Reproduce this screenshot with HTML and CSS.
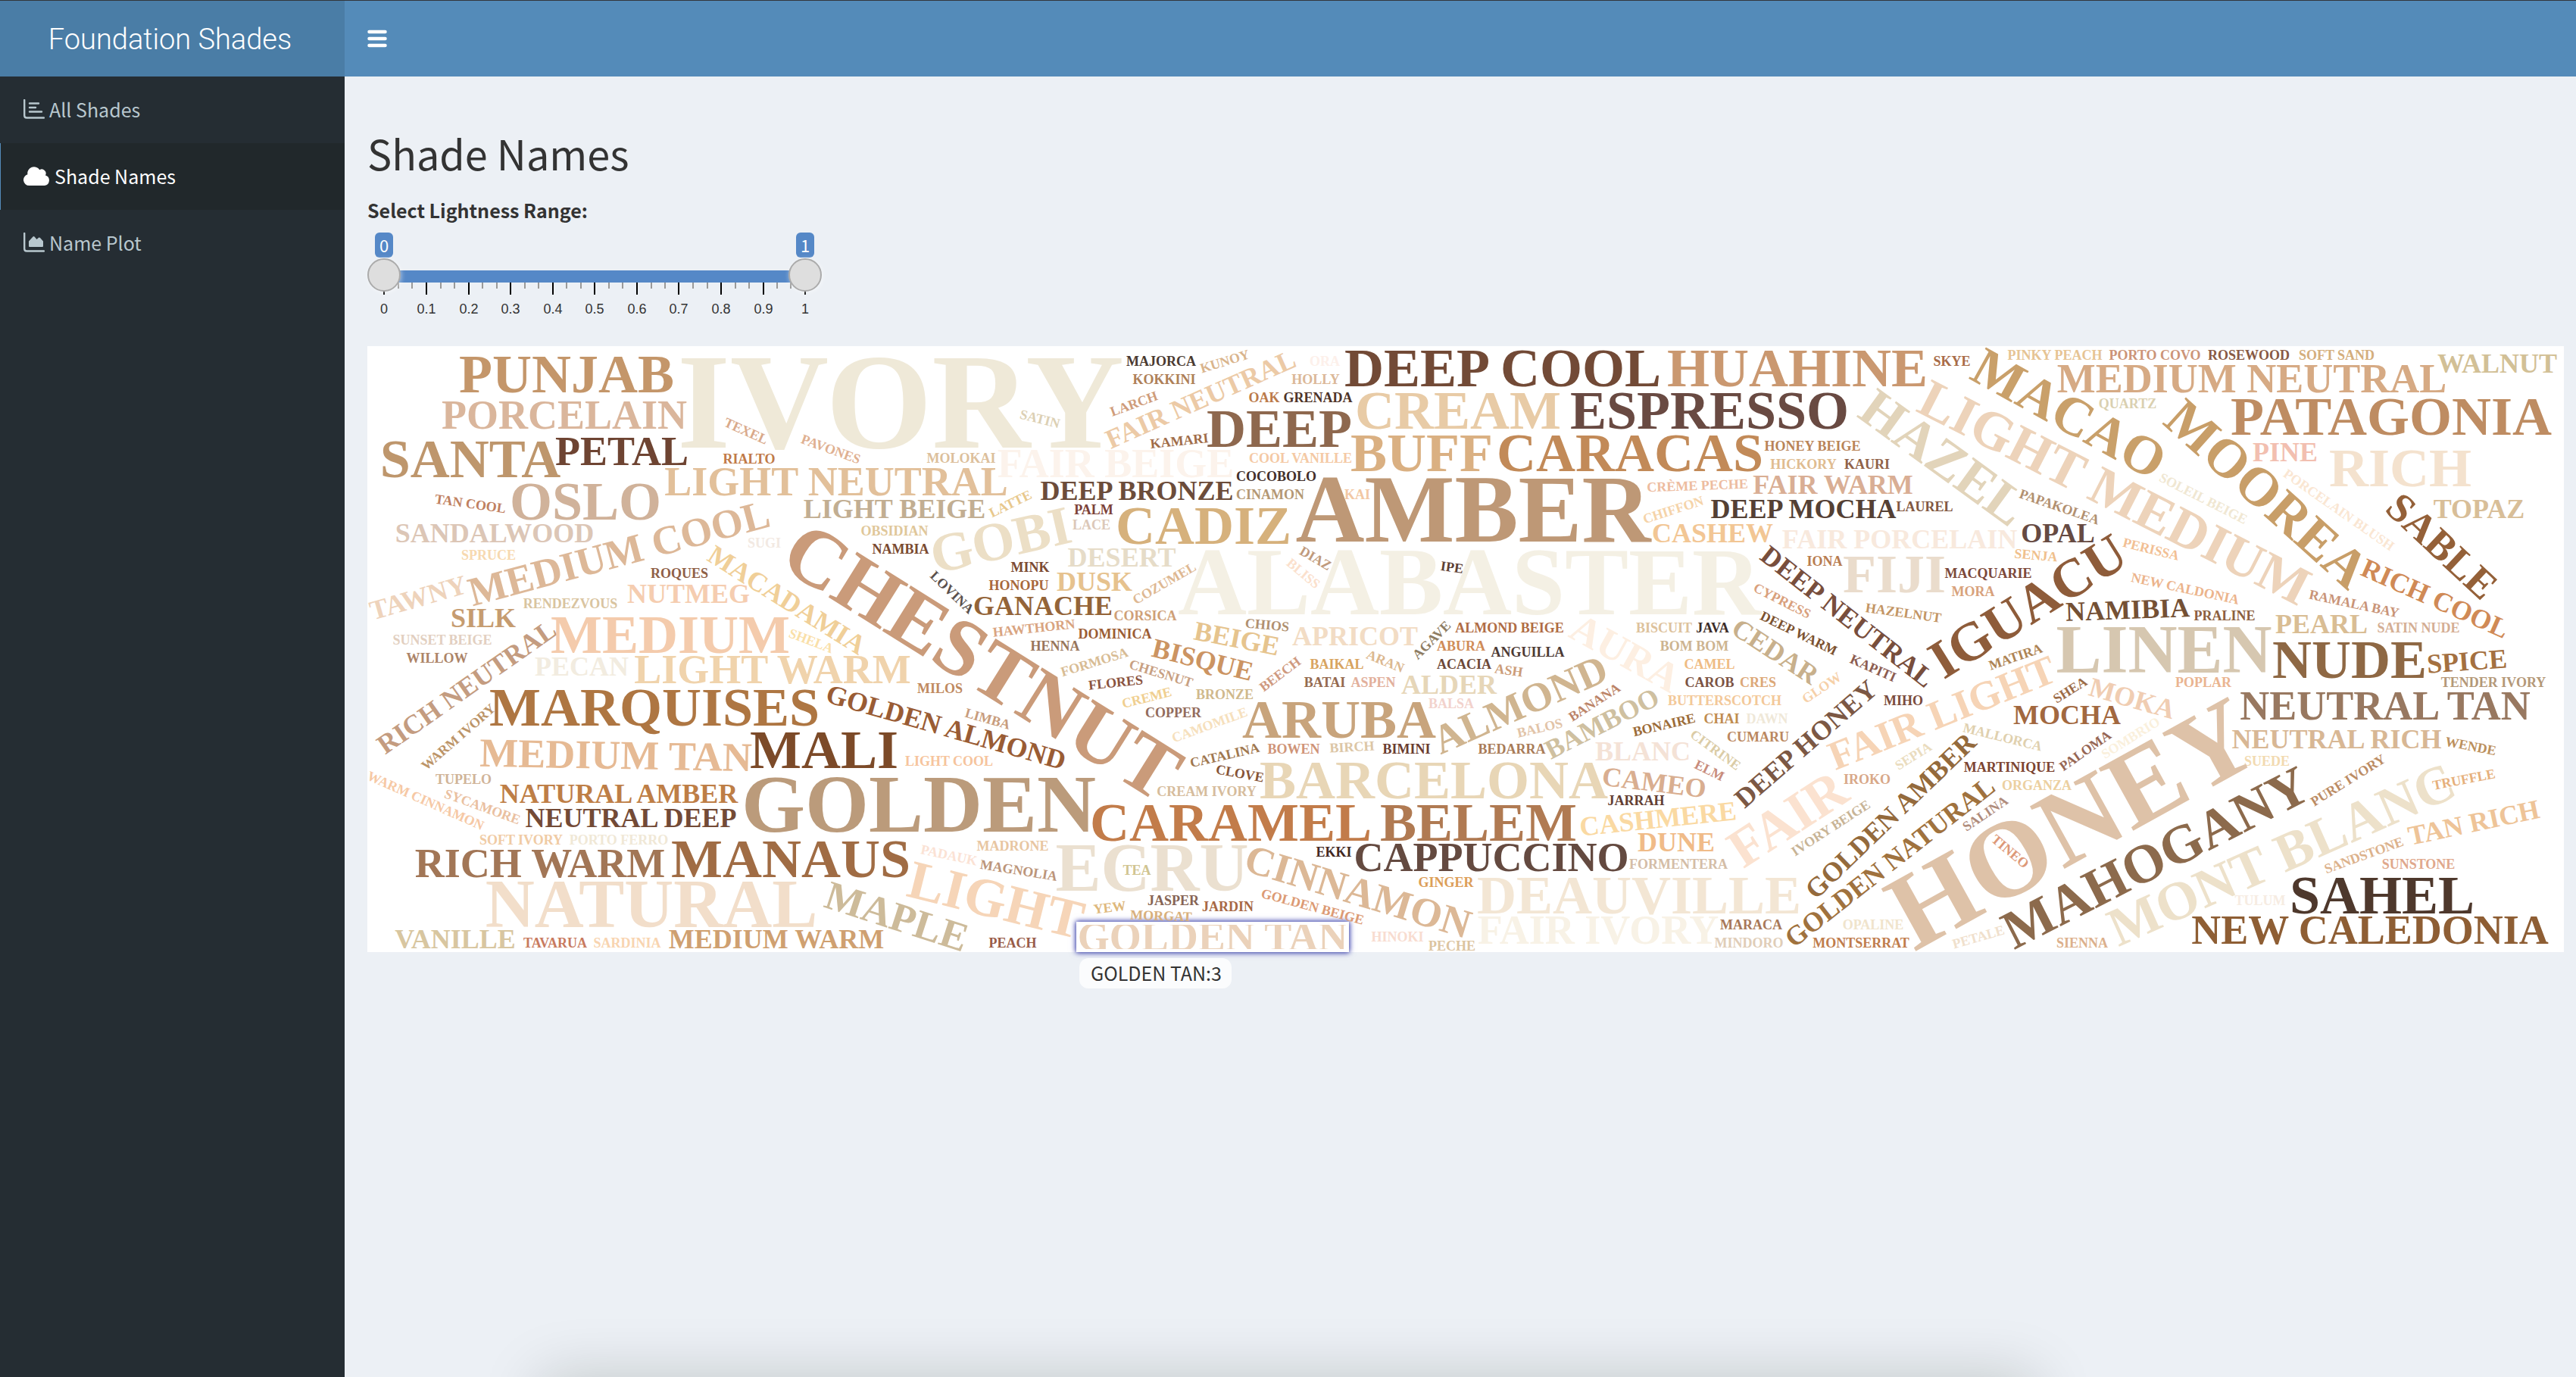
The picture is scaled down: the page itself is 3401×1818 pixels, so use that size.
FILE: index.html
```html
<!DOCTYPE html>
<html lang="en">
<head>
<meta charset="utf-8">
<meta name="viewport" content="width=device-width, initial-scale=1">
<title>Foundation Shades</title>
<link rel="stylesheet" href="styles.css">
</head>
<body>
<header class="topbar">
  <a class="brand" href="#">Foundation Shades</a>
  <button class="menu-toggle" type="button" aria-label="Toggle navigation">
    <svg viewBox="0 0 26 24" aria-hidden="true"><path d="M2.500 3H23.500M2.500 12H23.500M2.500 21H23.500"/></svg>
  </button>
</header>
<div class="shell">
  <nav class="sidebar" aria-label="Pages">
    <a class="nav-item" href="#all-shades">
      <svg class="nav-icon" viewBox="0 0 28 26" aria-hidden="true"><path class="stroke" d="M1.200 1V21.500Q1.200 24.500 4.200 24.500H27M8 5.500H20M8 11H16M8 16.500H24"/></svg>
      <span>All Shades</span>
    </a>
    <a class="nav-item active" href="#shade-names" aria-current="page">
      <svg class="nav-icon wide" viewBox="0 0 35 26" aria-hidden="true"><path d="M7.500 26A7.500 7.500 0 0 1 5.400 11.300 A8.700 8.700 0 0 1 21.300 5.200 A5.500 5.500 0 0 1 29 12.400 A7 7 0 0 1 28 26Z"/></svg>
      <span>Shade Names</span>
    </a>
    <a class="nav-item" href="#name-plot">
      <svg class="nav-icon" viewBox="0 0 28 26" aria-hidden="true"><path class="stroke" d="M1.200 1V21.500Q1.200 24.500 4.200 24.500H27"/><path d="M7 18V11.500L12.500 5.500Q13.500 4.500 14.500 5.500L17.500 9L20 6.800Q21 6.200 22 7L26 11.500V18Q26 19 25 19H8Q7 19 7 18Z"/></svg>
      <span>Name Plot</span>
    </a>
  </nav>
  <main class="content">
    <h1>Shade Names</h1>
    <div class="range">
      <label class="range-label" for="light-min">Select Lightness Range:</label>
      <div class="range-values">
        <output for="light-min">0</output>
        <output for="light-max">1</output>
      </div>
      <div class="range-track">
        <input id="light-min" type="range" min="0" max="1" step="0.01" value="0">
        <input id="light-max" type="range" min="0" max="1" step="0.01" value="1" aria-label="Upper lightness">
      </div>
      <svg class="range-scale" viewBox="0 0 600 50" aria-hidden="true">
        <path class="minor" d="M41 0v8M59 0v8M97 0v8M115 0v8M152 0v8M171 0v8M208 0v8M226 0v8M263 0v8M282 0v8M319 0v8M337 0v8M375 0v8M393 0v8M430 0v8M449 0v8M486 0v8M504 0v8M541 0v8M559 0v8"/>
        <path class="major" d="M22 0v16M78 0v16M134 0v16M189 0v16M245 0v16M300 0v16M356 0v16M411 0v16M467 0v16M523 0v16M578 0v16"/>
        <text x="22" y="41">0</text><text x="78" y="41">0.1</text><text x="134" y="41">0.2</text><text x="189" y="41">0.3</text><text x="245" y="41">0.4</text><text x="300" y="41">0.5</text><text x="356" y="41">0.6</text><text x="411" y="41">0.7</text><text x="467" y="41">0.8</text><text x="523" y="41">0.9</text><text x="578" y="41">1</text>
      </svg>
    </div>
    <svg class="cloud" viewBox="0 0 2900 800" role="img" aria-label="Word cloud of foundation shade names">
      <rect class="cloud-paper" width="2900" height="800"/>
      <rect class="pick-glow" x="936" y="760" width="360" height="40"/>
      <g id="words"></g>
      <rect class="pick-frame" x="938" y="762" width="356" height="36"/>
      <rect class="tip-bubble" x="940" y="808" width="201" height="40" rx="12"/>
      <text class="tip-text" x="955" y="838">GOLDEN TAN:3</text>
    </svg>
  </main>
</div>
<div class="bottom-shade"></div>
<script src="cloud.js"></script>
</body>
</html>
```
FILE: styles.css
```css
* { box-sizing: border-box; }

body {
  margin: 0;
  min-height: 100vh;
  display: flex;
  flex-direction: column;
  background: #ecf0f5;
  color: #333;
  font-family: "Noto Sans CJK SC", "Noto Sans", sans-serif;
  font-size: 25px;
  line-height: 36px;
}

.topbar {
  display: flex;
  height: 101px;
  border-top: 1px solid #33363b;
  background: #548bb9;
}

.brand {
  display: flex;
  align-items: center;
  justify-content: center;
  width: 455px;
  padding: 2px 6px 0 0;
  background: #4a7da6;
  color: #fff;
  font: 300 38px/48px Roboto, "Liberation Sans", sans-serif;
  text-decoration: none;
}

.menu-toggle {
  display: flex;
  align-items: center;
  padding: 0 30px;
  border: 0;
  background: none;
}

.menu-toggle svg {
  width: 26px;
  height: 24px;
  fill: none;
  stroke: #fff;
  stroke-width: 4.500;
  stroke-linecap: round;
}

.shell {
  display: flex;
  flex: 1;
}

.sidebar {
  flex: none;
  width: 455px;
  background: #252d33;
}

.nav-item {
  display: flex;
  align-items: center;
  gap: 6px;
  height: 88px;
  padding: 0 0 2px 30px;
  border-left: 1px solid transparent;
  color: #b8c7ce;
  text-decoration: none;
}

.nav-item.active {
  background: #21282b;
  border-left-color: #548bb9;
  color: #fff;
}

.nav-icon {
  width: 28px;
  height: 26px;
  fill: currentColor;
}

.nav-icon.wide { width: 35px; }

.nav-icon .stroke {
  fill: none;
  stroke: currentColor;
  stroke-width: 2.400;
  stroke-linecap: round;
}

.content {
  flex: 1;
  min-width: 0;
  padding: 64px 16px 30px 30px;
}

h1 {
  margin: 0;
  font-size: 54px;
  font-weight: 400;
  line-height: 74px;
}

.range {
  width: 600px;
  margin-bottom: 34px;
}

.range-label {
  display: block;
  margin-top: 20px;
  font-weight: 700;
}

.range-values {
  display: flex;
  justify-content: space-between;
  padding: 12px 10px 0;
}

.range-values output {
  width: 24px;
  height: 33px;
  border-radius: 6px;
  background: #5588c7;
  color: #fff;
  font-size: 22px;
  line-height: 32px;
  text-align: center;
}

.range-track {
  display: grid;
  align-items: center;
  height: 44px;
  margin-top: 1px;
  background: linear-gradient(#5588c7, #5588c7) center 16px / 556px 16px no-repeat;
}

.range-track input {
  grid-area: 1 / 1;
  width: 100%;
  height: 44px;
  margin: 0;
  appearance: none;
  background: none;
  pointer-events: none;
}

.range-track input::-webkit-slider-thumb {
  appearance: none;
  width: 44px;
  height: 44px;
  border: 2px solid #ababab;
  border-radius: 50%;
  background: #dedede;
  box-shadow: 1px 1px 6px rgba(255, 255, 255, 0.5);
  pointer-events: auto;
}

.range-scale {
  display: block;
  position: relative;
  z-index: -1;
  width: 600px;
  height: 50px;
  margin-top: -12px;
}

.range-scale path { stroke-width: 2; }
.range-scale .minor { stroke: #999; }
.range-scale .major { stroke: #000; }

.range-scale text {
  fill: #333;
  font: 18px "Liberation Sans", Arial, sans-serif;
  text-anchor: middle;
}

.cloud {
  display: block;
  width: 100%;
  overflow: visible;
}

.cloud-paper { fill: #fff; }

#words {
  font-family: "Liberation Serif", "Times New Roman", serif;
  font-weight: 700;
  text-anchor: middle;
}

.pick-glow {
  fill: #fff;
  filter: drop-shadow(0 0 3px #3a3fa8) drop-shadow(0 0 3px rgba(70, 75, 180, 0.6));
}

.pick-frame {
  fill: none;
  stroke: #fff;
  stroke-width: 4;
}

.tip-bubble { fill: rgba(255, 255, 255, 0.8); }

.tip-text {
  fill: #333;
  font-size: 25px;
}

.bottom-shade {
  position: fixed;
  bottom: -100px;
  left: 21%;
  width: 58%;
  height: 100px;
  box-shadow: 0 0 80px rgba(0, 20, 10, 0.180);
  pointer-events: none;
}
```
FILE: cloud.js
```js
// Each row: shade name, count, centre x, centre y, angle in degrees, colour.
const shades = [
  ["PUNJAB",4,263,37,0,"#c4966a"],["PORCELAIN",3,260,91,0,"#dab69c"],["SANTA",4,136,149,0,"#be966c"],
  ["PETAL",3,336,139,0,"#6e4432"],["IVORY",10,704,74,0,"#efe9d8"],["TEXEL",1,500,112,24,"#d9a98a"],
  ["PAVONES",1,612,136,20,"#dfb091"],["RIALTO",1,504,149,0,"#c07a48"],["LIGHT NEUTRAL",3,619,179,0,"#e2c09a"],
  ["OSLO",4,288,205,0,"#d0b29a"],["TAN COOL",1,136,208,8,"#c08060"],["SANDALWOOD",2,168,247,0,"#dcc6b6"],
  ["MEDIUM COOL",3,332,273,-15,"#ddb898"],["SUGI",1,524,260,0,"#f2e9e2"],["SPRUCE",1,160,276,0,"#f7d9b0"],
  ["ROQUES",1,412,300,0,"#8f6046"],["NUTMEG",2,424,327,0,"#f5cdb0"],["TAWNY",2,67,332,-16,"#eed3bb"],
  ["RENDEZVOUS",1,268,340,0,"#d9c4a0"],["MACADAMIA",2,554,335,32,"#f0cf98"],["SILK",2,153,359,0,"#c69c70"],
  ["SUNSET BEIGE",1,99,388,0,"#e2cfc0"],["RICH NEUTRAL",2,131,450,-35,"#c49c80"],["MEDIUM",4,400,381,0,"#f4cbac"],
  ["SHELA",1,586,389,21,"#fae0a8"],["CHESTNUT",6,812,416,32,"#ca9b7a"],["OBSIDIAN",1,696,244,0,"#e0c79a"],
  ["NAMBIA",1,704,268,0,"#7a4a30"],["LIGHT BEIGE",2,696,215,0,"#c2ae92"],
  ["SATIN",1,888,96,14,"#dcd0b4"],["MAJORCA",1,1048,20,0,"#4a3a30"],["KUNOY",1,1132,20,-17,"#d9b48c"],
  ["KOKKINI",1,1052,44,0,"#ae8058"],["ORA",1,1264,20,0,"#fdf0ea"],["HOLLY",1,1252,44,0,"#dbb898"],
  ["LARCH",1,1012,76,-20,"#cf9c7a"],["FAIR NEUTRAL",2,1100,70,-24,"#eccaa6"],["OAK",1,1184,68,0,"#bb7a4a"],
  ["GRENADA",1,1255,68,0,"#4e3428"],["DEEP",4,1204,109,0,"#8e684e"],["KAMARI",1,1072,125,-6,"#a06c48"],
  ["MOLOKAI",1,784,148,0,"#dcbf9c"],["FAIR BEIGE",3,988,155,0,"#fcf3ec"],["COOL VANILLE",1,1232,148,0,"#f4c9a4"],
  ["COCOBOLO",1,1200,172,0,"#43302a"],["CINAMON",1,1192,196,0,"#b49874"],["DEEP BRONZE",2,1016,191,0,"#6c4c3a"],
  ["CREAM",4,1440,85,0,"#e8cba6"],["BUFF",4,1392,141,0,"#dab082"],["LATTE",1,849,208,-26,"#e8c88c"],
  ["GOBI",4,836,256,-13,"#ecdfc6"],["PALM",1,959,216,0,"#7c4238"],["LACE",1,956,236,0,"#dcc8b8"],
  ["CADIZ",4,1104,237,0,"#d6b17c"],["AMBER",7,1460,216,0,"#be9876"],["KAI",1,1307,196,0,"#f2c8a4"],
  ["DESERT",2,996,279,0,"#e6dcc8"],["MINK",1,875,292,0,"#7c4a32"],["HONOPU",1,860,316,0,"#a8683c"],
  ["DUSK",2,960,311,0,"#e6c28e"],["LOVINA",1,772,325,44,"#5a504c"],["GANACHE",2,892,343,0,"#946438"],
  ["CORSICA",1,1027,356,0,"#cfa078"],["COZUMEL",1,1052,313,-30,"#deb892"],["ALABASTER",7,1455,312,0,"#f4f0e4"],
  ["DIAZ",1,1252,280,30,"#c09a7c"],["BLISS",1,1236,300,40,"#fbe0cc"],["IPE",1,1432,292,8,"#5c4034"],
  ["HAWTHORN",1,880,372,-6,"#d9a480"],["DOMINICA",1,987,380,0,"#9c5c34"],["HENNA",1,908,396,0,"#98765c"],
  ["CHIOS",1,1188,368,5,"#b09070"],["BEIGE",2,1148,386,11,"#e6c48e"],["APRICOT",2,1304,383,0,"#f2dcc4"],
  ["AGAVE",1,1405,388,-45,"#8e7c62"],["ALMOND BEIGE",1,1508,372,0,"#b06c44"],["ABURA",1,1444,396,0,"#d08c58"],
  ["ANGUILLA",1,1532,404,0,"#4c3a34"],["ACACIA",1,1448,420,0,"#6c4838"],["ASH",1,1507,428,8,"#cc9c78"],
  ["BISQUE",2,1103,414,14,"#cc9462"],["ARAN",1,1344,416,22,"#dcb890"],["BEECH",1,1205,433,-37,"#cf9a80"],
  ["BAIKAL",1,1280,420,0,"#d8a460"],["BATAI",1,1264,444,0,"#956a50"],["ASPEN",1,1328,444,0,"#e2b09c"],
  ["ALDER",2,1428,447,0,"#e6d6b8"],["BALSA",1,1431,472,0,"#f2d2cc"],["FORMOSA",1,960,417,-17,"#d8bc94"],
  ["CHESNUT",1,1048,432,17,"#c8a082"],["FLORES",1,988,444,-6,"#8a5440"],["CREME",1,1029,464,-14,"#f0cf90"],
  ["BRONZE",1,1132,460,0,"#d0b98c"],["COPPER",1,1064,484,0,"#936c5c"],["CAMOMILE",1,1112,500,-20,"#f6e0bc"],
  ["MILOS",1,756,452,0,"#c08a60"],["LIMBA",1,819,492,16,"#c89c7c"],["GOLDEN ALMOND",2,764,503,16,"#9a5c34"],
  ["LIGHT COOL",1,768,548,0,"#f6c49c"],["ARUBA",4,1283,493,0,"#c8a47c"],["CATALINA",1,1132,540,-13,"#a07850"],
  ["BOWEN",1,1223,532,0,"#cf9478"],["BIRCH",1,1300,529,-3,"#dcc6a6"],["BIMINI",1,1372,532,0,"#6a3c30"],
  ["ALMOND",3,1522,473,-24,"#d0b590"],["CLOVE",1,1152,564,10,"#865436"],["CREAM IVORY",1,1108,588,0,"#d6bc9c"],
  ["BARCELONA",4,1408,573,0,"#e8d6b6"],["CARAMEL",4,1140,629,0,"#c27c4a"],["BELEM",4,1467,629,0,"#b07a52"],
  ["GOLDEN",6,728,605,0,"#bb9b7b"],["MADRONE",1,852,660,0,"#e8c6a2"],["PADAUK",1,768,672,12,"#fbe2d4"],
  ["MAGNOLIA",1,860,692,9,"#bc957a"],["ECRU",5,1036,689,0,"#ebe0d0"],["TEA",1,1016,692,0,"#d0c490"],
  ["CINNAMON",3,1308,720,17,"#dcb896"],["EKKI",1,1276,668,0,"#43291f"],["CAPPUCCINO",3,1484,675,0,"#644a40"],
  ["GINGER",1,1424,708,0,"#dc9e58"],["JASPER",1,1064,732,0,"#866454"],["JARDIN",1,1136,740,0,"#a86844"],
  ["YEW",1,980,741,-7,"#deb87c"],["MORGAT",1,1048,752,2,"#d8b07c"],["GOLDEN BEIGE",1,1248,740,15,"#dc9a74"],
  ["GOLDEN TAN",3,1116,780,0,"#ebd2ba"],["HINOKI",1,1360,780,0,"#f8dcd0"],["PECHE",1,1432,792,0,"#dcc4a0"],
  ["PEACH",1,852,788,0,"#985c48"],["LIGHT",4,830,731,14,"#f6d5b8"],["MAPLE",3,699,753,18,"#cdbb9a"],
  ["WILLOW",1,92,412,0,"#ac8468"],["PECAN",2,283,423,0,"#f2ece0"],["LIGHT WARM",3,535,427,0,"#f0d3ac"],
  ["MARQUISES",4,379,477,0,"#ae7642"],["WARM IVORY",1,120,516,-41,"#bc9468"],["MEDIUM TAN",3,328,540,1,"#e6ba94"],
  ["MALI",4,603,533,0,"#7c4a28"],["TUPELO",1,127,572,0,"#d0b498"],["WARM CINNAMON",1,77,600,24,"#f6c8a4"],
  ["SYCAMORE",1,152,608,20,"#eac0a0"],["NATURAL AMBER",2,332,591,0,"#be7e46"],["NEUTRAL DEEP",2,348,623,0,"#734a36"],
  ["SOFT IVORY",1,203,652,0,"#f0cba4"],["PORTO FERRO",1,332,652,0,"#f0e8d6"],["RICH WARM",3,228,683,0,"#a27656"],
  ["MANAUS",4,559,677,0,"#a06c44"],["NATURAL",5,375,737,0,"#f2deca"],["VANILLE",2,116,783,0,"#d8c6a0"],
  ["TAVARUA",1,248,788,0,"#c87a60"],["SARDINIA",1,343,788,0,"#f8d4b0"],["MEDIUM WARM",2,540,783,0,"#cfa070"],
  ["DEEP COOL",4,1499,29,0,"#724a36"],["HUAHINE",4,1888,29,0,"#ca9870"],["SKYE",1,2092,20,0,"#a86c48"],
  ["ESPRESSO",4,1772,85,0,"#694a42"],["CARACAS",4,1667,141,0,"#c28a58"],["HONEY BEIGE",1,1908,132,0,"#b98458"],
  ["HICKORY",1,1896,156,0,"#dfbc90"],["KAURI",1,1980,156,0,"#906248"],["CRÈME PECHE",1,1756,184,-2,"#edbca0"],
  ["FAIR WARM",2,1935,183,0,"#d9ae94"],["CHIFFON",1,1724,216,-18,"#f5d3a8"],["DEEP MOCHA",2,1896,215,0,"#544034"],
  ["LAUREL",1,2056,212,0,"#805842"],["CASHEW",2,1776,247,0,"#f2c694"],["FAIR PORCELAIN",2,2023,255,0,"#f8e9dd"],
  ["IONA",1,1924,284,0,"#b87c50"],["FIJI",4,2016,301,0,"#eadccc"],["MACQUARIE",1,2140,300,0,"#7c483a"],
  ["MORA",1,2120,324,0,"#d8a27c"],["DEEP NEUTRAL",2,1954,357,38,"#784e3c"],["CYPRESS",1,1868,336,27,"#d9a07c"],
  ["HAZELNUT",1,2028,352,8,"#c39564"],["DEEP WARM",1,1890,379,26,"#7c5230"],["BISCUIT",1,1712,372,0,"#ddc29c"],
  ["JAVA",1,1776,372,0,"#3c2c28"],["BOM BOM",1,1752,396,0,"#cdb490"],["CEDAR",2,1859,403,33,"#c8b08c"],
  ["AURA",3,1661,405,29,"#fdefe2"],["IGUACU",4,2192,343,-32,"#8e5c3a"],["HAZEL",4,2081,147,36,"#e2d4ba"],
  ["LIGHT MEDIUM",4,2307,193,27,"#edd3ba"],["MACAO",4,2247,89,29,"#c9a06a"],
  ["PINKY PEACH",1,2228,12,0,"#e6c494"],["PORTO COVO",1,2360,12,0,"#cc9478"],["ROSEWOOD",1,2484,12,0,"#885a44"],
  ["SOFT SAND",1,2600,12,0,"#d4ae7c"],["WALNUT",2,2812,23,0,"#d2c096"],["MEDIUM NEUTRAL",3,2488,43,0,"#d6aa84"],
  ["QUARTZ",1,2324,76,0,"#dad0b0"],["PATAGONIA",4,2672,93,0,"#be8c62"],["MOOREA",4,2508,195,42,"#c89e68"],
  ["PINE",2,2532,140,0,"#f2bfb0"],["RICH",4,2684,161,0,"#f4e2ce"],["TOPAZ",2,2788,215,0,"#d8be98"],
  ["SABLE",3,2739,264,43,"#946038"],["SOLEIL BEIGE",1,2424,201,27,"#f0e7d2"],["PORCELAIN BLUSH",1,2603,216,35,"#fae6d2"],
  ["PAPAKOLEA",1,2234,212,19,"#b29070"],["OPAL",2,2232,247,0,"#664a42"],["SENJA",1,2203,276,5,"#f0c08c"],
  ["PERISSA",1,2355,268,14,"#f2bf94"],["NEW CALDONIA",1,2400,320,12,"#ecb48c"],["NAMIBIA",2,2324,348,-2,"#745034"],
  ["PRALINE",1,2452,356,0,"#8c6040"],["PEARL",2,2580,367,0,"#d9bd94"],["SATIN NUDE",1,2708,372,0,"#d4ae94"],
  ["RAMALA BAY",1,2623,340,12,"#c99478"],["RICH COOL",2,2730,333,24,"#d08a56"],["LINEN",5,2372,401,0,"#d6c7b0"],
  ["NUDE",4,2617,414,0,"#8e6844"],["SPICE",2,2772,416,-4,"#a47040"],["TENDER IVORY",1,2807,444,0,"#b49878"],
  ["MATIRA",1,2176,410,-19,"#ae8454"],["SHEA",1,2248,454,-32,"#9c6c48"],["MOKA",2,2330,465,16,"#f0cdb2"],
  ["POPLAR",1,2424,444,0,"#eab490"],["MOCHA",2,2244,487,0,"#a2683f"],["NEUTRAL TAN",3,2664,475,0,"#987860"],
  ["NEUTRAL RICH",2,2600,519,0,"#d8b794"],["WENDE",1,2777,528,11,"#bc905c"],["SUEDE",1,2508,548,0,"#f2dab0"],
  ["SOMBRIO",1,2328,517,-32,"#faf0dc"],["HONEY",8,2250,630,-29,"#dec2a8"],["MAHOGANY",4,2361,675,-27,"#8c6a4c"],
  ["MONT BLANC",4,2527,671,-24,"#ede1ca"],["MALLORCA",1,2159,516,14,"#e0d0ae"],["IROKO",1,1980,572,0,"#d8a888"],
  ["SEPIA",1,2041,541,-32,"#eadcbe"],["MARTINIQUE",1,2168,556,0,"#7c4430"],["ORGANZA",1,2204,580,0,"#ecd0a0"],
  ["PALOMA",1,2268,534,-35,"#966654"],["PURE IVORY",1,2615,573,-32,"#bc8c64"],["TRUFFLE",1,2768,572,-11,"#e6b07c"],
  ["TAN RICH",2,2781,629,-12,"#eec498"],["SANDSTONE",1,2636,672,-20,"#dcb28c"],["SUNSTONE",1,2708,684,0,"#e0a88c"],
  ["SAHEL",4,2660,725,0,"#4e382c"],["TULUM",1,2499,732,0,"#f6ece2"],["NEW CALEDONIA",3,2644,771,0,"#8e5e34"],
  ["SIENNA",1,2264,788,0,"#dcb08c"],["PETALE",1,2127,780,-16,"#f0e0cc"],["TINEO",1,2169,667,40,"#dd9878"],
  ["SALINA",1,2136,617,-34,"#b08c7c"],
  ["CAMEL",1,1772,420,0,"#efbc84"],["CAROB",1,1772,444,0,"#7c5444"],["CRES",1,1836,444,0,"#dca878"],
  ["BUTTERSCOTCH",1,1792,468,0,"#f3c898"],["BONAIRE",1,1712,500,-13,"#9c6c38"],["CHAI",1,1788,492,0,"#c08c50"],
  ["DAWN",1,1848,492,0,"#efe8d8"],["CUMARU",1,1836,516,0,"#bb8860"],["GLOW",1,1920,451,-34,"#f6d0a8"],
  ["KAPITI",1,1988,425,24,"#8c5c50"],["MIHO",1,2028,468,0,"#7a4c3c"],["BANANA",1,1620,470,-33,"#bc8468"],
  ["BALOS",1,1548,504,-13,"#e2c4a8"],["BAMBOO",2,1630,498,-27,"#cfc0a0"],["BEDARRA",1,1511,532,0,"#a87c58"],
  ["BLANC",2,1684,535,0,"#f4e2d6"],["CITRINE",1,1780,533,36,"#dbcca6"],["ELM",1,1772,560,26,"#c88c7c"],
  ["CAMEO",2,1699,576,7,"#d9ae90"],["JARRAH",1,1675,600,0,"#623e32"],["CASHMERE",2,1704,624,-6,"#fad9a2"],
  ["DUNE",2,1728,655,0,"#f0bb88"],["FORMENTERA",1,1731,684,0,"#d4bda6"],["DEAUVILLE",4,1679,725,0,"#f3e6d4"],
  ["FAIR IVORY",3,1625,771,0,"#f8f2e6"],["MARACA",1,1827,764,0,"#a87858"],["MINDORO",1,1824,788,0,"#e0cdb8"],
  ["OPALINE",1,1988,764,0,"#f0e4cc"],["MONTSERRAT",1,1972,788,0,"#c07c4c"],["DEEP HONEY",2,1899,525,-41,"#7c5844"],
  ["FAIR LIGHT",3,2079,484,-22,"#f6d4b6"],["FAIR",4,1875,624,-33,"#fbe2d0"],["IVORY BEIGE",1,1932,636,-33,"#c8b496"],
  ["GOLDEN AMBER",2,2011,620,-44,"#946a3c"],["GOLDEN NATURAL",2,2010,681,-38,"#a0723e"]
];

const SIZE_PER_COUNT = 18;
const BASELINE_PER_COUNT = 6;
const words = document.getElementById("words");

for (const [name, count, x, y, angle, colour] of shades) {
  const word = document.createElementNS("http://www.w3.org/2000/svg", "text");
  word.textContent = name;
  word.setAttribute("font-size", count * SIZE_PER_COUNT);
  word.setAttribute("y", count * BASELINE_PER_COUNT);
  word.setAttribute("fill", colour);
  word.setAttribute("transform", `translate(${x} ${y}) rotate(${angle})`);
  words.append(word);
}
```
